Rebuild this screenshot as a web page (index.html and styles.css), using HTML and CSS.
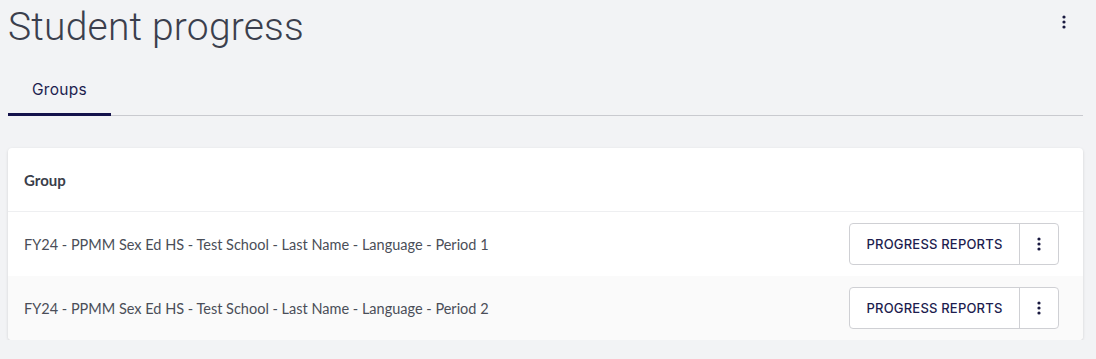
FILE: index.html
```html
<!DOCTYPE html>
<html lang="en">
<head>
    <meta charset="UTF-8">
    <meta name="viewport" content="width=device-width, initial-scale=1.0">
    <title>Student progress</title>
    <link rel="stylesheet" href="styles.css">
</head>
<body>
    <div class="page">
        <header class="page-header">
            <h1>Student progress</h1>
            <button class="icon-btn" aria-label="More">
                <svg width="4" height="14" viewBox="0 0 4 14"><circle cx="2" cy="2" r="1.6"/><circle cx="2" cy="7" r="1.6"/><circle cx="2" cy="12" r="1.6"/></svg>
            </button>
        </header>

        <nav class="tabs">
            <a class="tab active" href="#">Groups</a>
        </nav>

        <div class="card">
            <div class="row head">
                <span class="col-name">Group</span>
            </div>
            <div class="row">
                <span class="col-name">FY24 - PPMM Sex Ed HS - Test School - Last Name - Language - Period 1</span>
                <div class="split">
                    <button class="split-main">PROGRESS REPORTS</button>
                    <button class="split-more" aria-label="More">
                        <svg width="4" height="14" viewBox="0 0 4 14"><circle cx="2" cy="2" r="1.6"/><circle cx="2" cy="7" r="1.6"/><circle cx="2" cy="12" r="1.6"/></svg>
                    </button>
                </div>
            </div>
            <div class="row alt">
                <span class="col-name">FY24 - PPMM Sex Ed HS - Test School - Last Name - Language - Period 2</span>
                <div class="split">
                    <button class="split-main">PROGRESS REPORTS</button>
                    <button class="split-more" aria-label="More">
                        <svg width="4" height="14" viewBox="0 0 4 14"><circle cx="2" cy="2" r="1.6"/><circle cx="2" cy="7" r="1.6"/><circle cx="2" cy="12" r="1.6"/></svg>
                    </button>
                </div>
            </div>
        </div>
    </div>
</body>
</html>
```

FILE: styles.css
```css
body {
    margin: 0;
    background-color: #f2f3f5;
    font-family: 'Roboto', sans-serif;
    color: #3a3f4b;
}
.page {
    padding: 0 13px 0 8px;
}
.page-header {
    display: flex;
    justify-content: space-between;
    align-items: flex-start;
    height: 60px;
}
h1 {
    margin: 4px 0 0;
    font-size: 39px;
    font-weight: 300;
    color: #3b3f4d;
    letter-spacing: 0.2px;
}
.icon-btn {
    margin: 15px 17px 0 0;
    padding: 0;
    border: none;
    background: none;
    fill: #1a1a40;
    cursor: pointer;
}
.tabs {
    display: flex;
    border-bottom: 1px solid #c9cacf;
    margin-top: 14px;
}
.tab {
    padding: 6px 24px 14px;
    font-family: 'Inter', sans-serif;
    font-size: 15.5px;
    color: #1d1d4f;
    text-decoration: none;
    border-bottom: 3px solid transparent;
    margin-bottom: -1px;
    letter-spacing: 0.3px;
}
.tab.active {
    border-bottom-color: #14124b;
}
.card {
    margin-top: 32px;
    background: #fff;
    border-radius: 4px;
    box-shadow: 0 1px 3px rgba(0, 0, 0, 0.14);
    overflow: hidden;
}
.row {
    display: flex;
    align-items: center;
    justify-content: space-between;
    height: 64px;
    padding: 0 24px 0 16px;
    font-family: 'Lato', sans-serif;
    font-size: 14.5px;
    color: #4a4e58;
}
.row.head {
    border-bottom: 1px solid #eeeff1;
    height: 63px;
    font-weight: bold;
    font-size: 15px;
    color: #3a3e4a;
}
.row.alt {
    background: #fafafa;
}
.split {
    display: flex;
    height: 40px;
    border: 1px solid #cfd0d4;
    border-radius: 4px;
    background: #fff;
}
.split button {
    border: none;
    background: none;
    padding: 0;
    cursor: pointer;
    color: #1d1d4f;
}
.split-main {
    width: 170px;
    font-family: 'Inter', sans-serif;
    font-size: 13px;
    font-weight: 500;
    letter-spacing: 0.2px;
    border-right: 1px solid #cfd0d4 !important;
}
.split-more {
    width: 38px;
    fill: #1a1a40;
    display: flex;
    align-items: center;
    justify-content: center;
}
```
